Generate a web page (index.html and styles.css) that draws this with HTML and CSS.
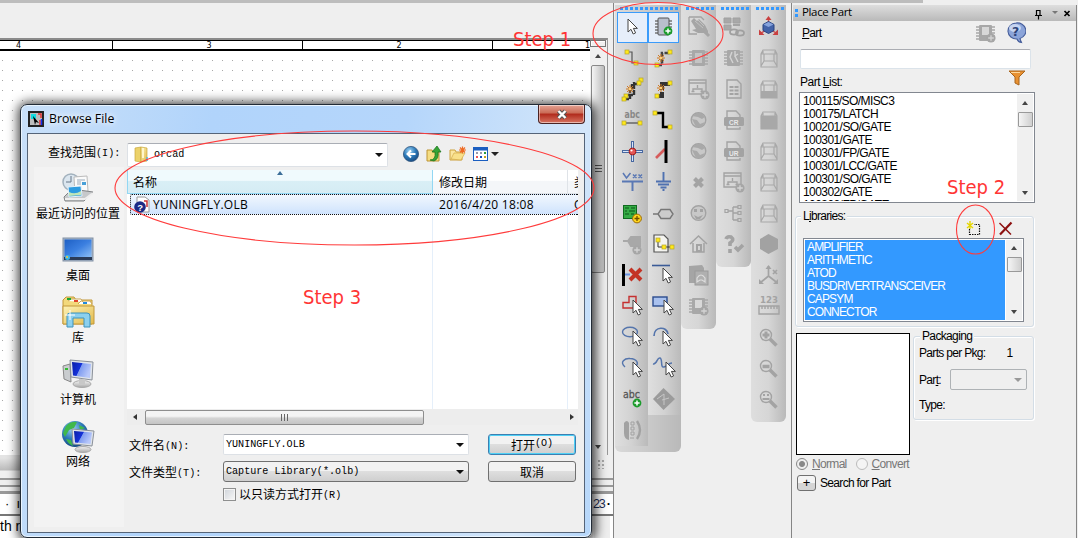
FILE: index.html
```html
<!DOCTYPE html>
<html lang="zh">
<head>
<meta charset="utf-8">
<title>Place Part</title>
<link rel="stylesheet" href="styles.css">
</head>
<body>
<svg class="defs" width="0" height="0">
<defs>
<linearGradient id="blueG" x1="0" y1="0" x2="1" y2="1"><stop offset="0" stop-color="#1d5fc4"/><stop offset=".5" stop-color="#3b7fe0"/><stop offset="1" stop-color="#8fc0f5"/></linearGradient>
<linearGradient id="scrG" x1="0" y1="0" x2="1" y2=".4"><stop offset="0" stop-color="#0a1fa8"/><stop offset=".48" stop-color="#1532d8"/><stop offset=".52" stop-color="#7f9cf0"/><stop offset="1" stop-color="#b8c8fa"/></linearGradient>
<linearGradient id="foldG" x1="0" y1="0" x2="1" y2="1"><stop offset="0" stop-color="#fdf3b8"/><stop offset="1" stop-color="#e2b94a"/></linearGradient>
<linearGradient id="greyG" x1="0" y1="0" x2="0" y2="1"><stop offset="0" stop-color="#f4f4f4"/><stop offset="1" stop-color="#a9a9a9"/></linearGradient>
<radialGradient id="ballG" cx=".4" cy=".3" r=".8"><stop offset="0" stop-color="#9fd4f5"/><stop offset=".5" stop-color="#2c79b8"/><stop offset="1" stop-color="#123f74"/></radialGradient>
<g id="cur"><path d="M0 0V13L3 10.3 5.2 15 7.6 13.9 5.4 9.4H9.4Z" fill="#fff" stroke="#444" stroke-width="1"/></g>
<g id="yb"><rect x="-2" y="-2" width="4" height="4" fill="#ffe81a" stroke="#b3a32c" stroke-width=".7"/></g>
<g id="spark" stroke="#d07820" stroke-width="1" fill="none"><path d="M-4 0H4M0-4V4M-3-3 3 3M3-3-3 3"/><circle r="1.3" fill="#ffd070" stroke="none"/></g>
<g id="plusG"><circle r="4.4" fill="#1c9c2c"/><path d="M-2.6 0H2.6M0-2.6V2.6" stroke="#fff" stroke-width="1.5"/></g>
<g id="plusX"><circle r="4.6" fill="#a6a6a6"/><path d="M-2.8 0H2.8M0-2.8V2.8" stroke="#d4d4d4" stroke-width="1.3"/></g>
<g id="chipX"><path d="M6 9h19M6 12h19M6 15h19M6 18h19M6 21h19" stroke="#a8a8a8" stroke-width="1.6"/><rect x="9" y="7" width="13" height="16" rx="1" fill="#a8a8a8"/></g>
<g id="magX"><circle cx="13" cy="13" r="5.5" fill="none" stroke="#a3a3a3" stroke-width="1.4"/><path d="M17 17l6.500 6.500" stroke="#a3a3a3" stroke-width="3.600"/></g>
<g id="cubeX" fill="none" stroke="#a8a8a8" stroke-width="1.2"><path d="M8 11 10 7H22L24 11V24H8ZM8 11H24M11 11V18H21V11M8 23l3-5M24 23l-3-5M10 8v3M22 8v3"/></g>
<symbol id="i-arrow" viewBox="0 0 31 31"><use href="#cur" x="11" y="7"/></symbol>
<symbol id="i-chip" viewBox="0 0 31 31"><path d="M7 9h17M7 12h17M7 15h17M7 18h17M7 21h17" stroke="#777" stroke-width="1.4"/><rect x="10" y="6" width="11" height="17" rx="1" fill="#b9bfcc" stroke="#555"/><use href="#plusG" x="20" y="19"/></symbol>
<symbol id="i-wire" viewBox="0 0 31 31"><path d="M11 9H15V20H18" fill="none" stroke="#555" stroke-width="1.2"/><use href="#yb" x="10" y="9"/><use href="#yb" x="19" y="20"/></symbol>
<symbol id="i-auto2" viewBox="0 0 31 31"><path d="M9 22H14V10H22" fill="none" stroke="#444" stroke-width="2.600" stroke-dasharray="5 1.500"/><use href="#spark" x="13" y="15"/><use href="#yb" x="22" y="9"/><use href="#yb" x="9" y="22"/></symbol>
<symbol id="i-auto3" viewBox="0 0 31 31"><path d="M7 25H13V14H15V10H24M11 21H17V8" fill="none" stroke="#333" stroke-width="2.400" stroke-dasharray="5 1"/><use href="#spark" x="13" y="15"/><use href="#yb" x="24" y="6"/><use href="#yb" x="22" y="9"/><use href="#yb" x="9" y="22"/><use href="#yb" x="7" y="25"/></symbol>
<symbol id="i-auto4" viewBox="0 0 31 31"><path d="M9 22H14V10H22" fill="none" stroke="#333" stroke-width="4" stroke-dasharray="9 2 14 0"/><use href="#spark" x="13" y="14"/><use href="#yb" x="22" y="9"/><use href="#yb" x="9" y="22"/></symbol>
<symbol id="i-abc" viewBox="0 0 31 31"><text x="7.500" y="13" font-size="10.500" font-weight="bold" fill="#888" font-family="DejaVu Sans" textLength="15.500" lengthAdjust="spacingAndGlyphs">abc</text><path d="M7 18H23" stroke="#555" stroke-width="1.300"/><use href="#yb" x="7" y="18"/><use href="#yb" x="23" y="18"/></symbol>
<symbol id="i-bus" viewBox="0 0 31 31"><path d="M8 8H15V22H22" fill="none" stroke="#000" stroke-width="2.400"/><use href="#yb" x="7" y="8"/><use href="#yb" x="22" y="22"/></symbol>
<symbol id="i-junc" viewBox="0 0 31 31"><path d="M5 15.500H26M15.500 5V26" stroke="#4868a0" stroke-width="3"/><path d="M6 15.500H25M15.500 6V25" stroke="#d9e6fb" stroke-width="1"/><circle cx="15.500" cy="15.500" r="3.400" fill="#e45656" stroke="#a11d1d"/><circle cx="14.500" cy="14.500" r="1.100" fill="#fff"/></symbol>
<symbol id="i-entry" viewBox="0 0 31 31"><path d="M8 22 17 13" stroke="#d65c5c" stroke-width="2.600"/><path d="M18 4V27" stroke="#000" stroke-width="3"/></symbol>
<symbol id="i-pwr" viewBox="0 0 31 31"><path d="M5 14.500H26M15.500 14.500V24" stroke="#5a78b4" stroke-width="2"/><path d="M6 6l3.500 5 4-5M16 7.500l3.500 3.500m0-3.500-3.500 3.500M21.500 7.500l3.500 3.500m0-3.500-3.500 3.500" fill="none" stroke="#5a78b4" stroke-width="1.500"/></symbol>
<symbol id="i-gnd" viewBox="0 0 31 31"><path d="M15.500 5V14M8 14.500H23M10 17.500H21M12.500 20.500H18.500M14.500 23H16.500" stroke="#4f71b0" stroke-width="1.900"/></symbol>
<symbol id="i-hier" viewBox="0 0 31 31"><rect x="6.500" y="7.500" width="13" height="13" fill="#35ac45" stroke="#116a20"/><path d="M8 10h4M14 10h4M8 13h2M12 13h6M8 16h4M14 16h3" stroke="#0c5518"/><circle cx="20" cy="20.500" r="4.400" fill="#ffd51d" stroke="#9c6a00"/><path d="M17.500 20.500h5M20 18v5" stroke="#714f00" stroke-width="1.300"/></symbol>
<symbol id="i-port" viewBox="0 0 31 31"><path d="M5 16H10L13 11.500H22L25 16 22 20.500H13L10 16" fill="#ccc" stroke="#777" stroke-width="1.400"/></symbol>
<symbol id="i-pin" viewBox="0 0 31 31"><path d="M6 12H11L14 8H23V17H14L11 12" fill="#a8a8a8" stroke="#a8a8a8" stroke-width="2"/><use href="#plusX" x="20" y="21"/></symbol>
<symbol id="i-off" viewBox="0 0 31 31"><path d="M6 6H16L20 10V23H6Z" fill="#f4f4f0" stroke="#555" stroke-width="1.200"/><path d="M10 11V18H24" fill="none" stroke="#333"/><use href="#yb" x="10" y="11"/><use href="#yb" x="16" y="18"/><use href="#yb" x="24" y="18"/></symbol>
<symbol id="i-noc" viewBox="0 0 31 31"><path d="M6.500 4V26" stroke="#000" stroke-width="3"/><path d="M8 14.500H13" stroke="#6890e0" stroke-width="2"/><path d="M13 9l11 11M24 9 13 20" stroke="#c33325" stroke-width="4"/></symbol>
<symbol id="i-line" viewBox="0 0 31 31"><path d="M4 5.500H22" stroke="#3b5b97" stroke-width="1.600"/><use href="#cur" x="15" y="8"/></symbol>
<symbol id="i-poly" viewBox="0 0 31 31"><path d="M6 17V11.500h6V5.500h7v11.500Z" fill="none" stroke="#c53030" stroke-width="1.400"/><use href="#cur" x="16" y="9"/></symbol>
<symbol id="i-rect" viewBox="0 0 31 31"><rect x="5" y="6" width="14" height="9" fill="#a9c1ee" stroke="#2c4c8e" stroke-width="1.400"/><use href="#cur" x="16" y="9"/></symbol>
<symbol id="i-ell" viewBox="0 0 31 31"><ellipse cx="13" cy="10" rx="7.500" ry="4.700" fill="none" stroke="#5575ac" stroke-width="1.400"/><use href="#cur" x="16" y="9"/></symbol>
<symbol id="i-arc" viewBox="0 0 31 31"><path d="M6 14C6 4 19 4 20 12" fill="none" stroke="#5575ac" stroke-width="1.700"/><use href="#cur" x="15" y="9"/></symbol>
<symbol id="i-earc" viewBox="0 0 31 31"><path d="M8 14C2 9 8 5 13 5.500 20 6 22 10 19 13" fill="none" stroke="#5575ac" stroke-width="1.400"/><use href="#cur" x="16" y="9"/></symbol>
<symbol id="i-bez" viewBox="0 0 31 31"><path d="M5 11C9 12 9 4 12 5S12 15 16 14 20 10 24 10" fill="none" stroke="#5575ac" stroke-width="1.500"/><use href="#cur" x="18" y="9"/></symbol>
<symbol id="i-txt" viewBox="0 0 31 31"><text x="6" y="14" font-size="11" fill="#555" stroke="#555" stroke-width=".3" font-family="DejaVu Sans" textLength="17" lengthAdjust="spacingAndGlyphs">abc</text><use href="#plusG" x="20" y="19"/></symbol>
<symbol id="i-diam" viewBox="0 0 31 31"><path d="M15.500 4 27 15 15.500 26 5 15Z" fill="#9b9b9b"/><path d="M9 15 16 10V21M14 16l7-2" stroke="#c6c6c6" fill="none"/></symbol>
<symbol id="i-misc" viewBox="0 0 31 31"><path d="M7 8q3-4 5 0v17q-5-1-5-7z" fill="#a2a2a2"/><path d="M14 7h3v3h-3zM14 12h3v3h-3zM14 17h3v3h-3zM13 23h4" fill="none" stroke="#a2a2a2"/><path d="M20 6q6 9 0 18" fill="none" stroke="#a2a2a2" stroke-width="2.400"/></symbol>
<symbol id="g-hand" viewBox="0 0 31 31"><path d="M6 5H18L21 8M6 5V22H14" fill="none" stroke="#a3a3a3" stroke-width="1.300"/><path d="M8 9l3-3 3 3 2-2 6 6 3 6v5l-4-3-6 0-6-3 4-1z" fill="#a5a5a5"/><path d="M21 19l5 5" stroke="#a5a5a5" stroke-width="3"/><path d="M12 9l8 7M15 8l6 6" stroke="#c8c8c8" stroke-width=".8"/></symbol>
<symbol id="g-chip" viewBox="0 0 31 31"><use href="#chipX"/><rect x="12" y="10" width="7" height="10" fill="#c4c4c4"/></symbol>
<symbol id="g-chip2" viewBox="0 0 31 31"><use href="#chipX"/><path d="M14 9l-2 5 3 6M17 8v5l3-2M17 13l3 6" stroke="#d4d4d4" fill="none" stroke-width="1.400"/></symbol>
<symbol id="g-chipadd" viewBox="0 0 31 31"><use href="#chipX"/><rect x="12" y="9" width="7" height="8" fill="#d8d8d8"/><use href="#plusX" x="21" y="20"/></symbol>
<symbol id="g-win" viewBox="0 0 31 31"><path d="M6 6H23V20H6ZM6 9H23M14.500 11v3M10 18v-3H19v3M8.500 17.500h3M17.500 17.500h3" fill="none" stroke="#a3a3a3" stroke-width="1.400"/><use href="#plusX" x="22" y="21"/></symbol>
<symbol id="g-face" viewBox="0 0 31 31"><circle cx="15.500" cy="15" r="7.300" fill="#c8c8c8" stroke="#a3a3a3" stroke-width="1.400"/><path d="M9 11l5-3h4l4 4-3 2-4-2zM9 14l5 1 3 4 5-2-3 5h-6z" fill="#a9a9a9"/></symbol>
<symbol id="g-smile" viewBox="0 0 31 31"><circle cx="15.500" cy="15" r="7.300" fill="#c8c8c8" stroke="#a3a3a3" stroke-width="1.400"/><path d="M11 11h3v3h-3zM17 11h3v3h-3zM11 17l4 2 5-2-3 4h-4z" fill="#a3a3a3"/></symbol>
<symbol id="g-x" viewBox="0 0 31 31"><path d="M11.500 11.500l8 8M19.500 11.500l-8 8" stroke="#a3a3a3" stroke-width="4"/></symbol>
<symbol id="g-home" viewBox="0 0 31 31"><path d="M7 15l8.500-8 8.500 8M10 14v9h11v-9" fill="none" stroke="#a3a3a3" stroke-width="1.500"/><path d="M14 16h4v6h-4z" fill="none" stroke="#a3a3a3" stroke-width="2"/></symbol>
<symbol id="g-lib" viewBox="0 0 31 31"><path d="M6 6l13-1 2 3V23H6z" fill="#a5a5a5"/><rect x="12" y="11" width="13" height="14" fill="#b0b0b0" stroke="#9a9a9a"/><path d="M14 22v-4q4-6 8 0v4l-3-2h-2z" fill="none" stroke="#ddd" stroke-width="1.200"/></symbol>
<symbol id="g-link" viewBox="0 0 31 31"><path d="M6 6h7v5H6zM15 6h7v5h-7zM6 13h7v5H6z" fill="#a8a8a8" stroke="#a0a0a0"/><path d="M15 13h7" stroke="#a3a3a3" stroke-width="2"/><ellipse cx="16" cy="20" rx="4" ry="2.600" fill="none" stroke="#a0a0a0" stroke-width="1.800"/><ellipse cx="22" cy="21" rx="4" ry="2.600" fill="none" stroke="#a0a0a0" stroke-width="1.800"/></symbol>
<symbol id="g-doc" viewBox="0 0 31 31"><path d="M9 6H19L23 10V24H9Z" fill="none" stroke="#a3a3a3" stroke-width="1.400"/><path d="M11.500 12h4v2h-4zM16.500 12h4v2h-4zM11.500 15.500h4v2h-4zM16.500 15.500h4v2h-4zM11.500 19h4v2h-4zM16.500 19h4v2h-4z" fill="#a3a3a3"/></symbol>
<symbol id="g-cr" viewBox="0 0 31 31"><path d="M9 12V6H18L22 10V20M9 21V24H22V22" fill="none" stroke="#a3a3a3" stroke-width="1.400"/><rect x="6" y="12" width="20" height="9" rx="1.500" fill="#a3a3a3"/><text x="11" y="19.500" font-size="8" font-weight="bold" fill="#e8e8e8" font-family="Liberation Sans" textLength="9.500" lengthAdjust="spacingAndGlyphs">CR</text></symbol>
<symbol id="g-ur" viewBox="0 0 31 31"><path d="M9 12V6H18L22 10V20M9 21V24H22V22" fill="none" stroke="#a3a3a3" stroke-width="1.400"/><rect x="6" y="12" width="20" height="9" rx="1.500" fill="#a3a3a3"/><text x="11" y="19.500" font-size="8" font-weight="bold" fill="#e8e8e8" font-family="Liberation Sans" textLength="9.500" lengthAdjust="spacingAndGlyphs">UR</text></symbol>
<symbol id="g-tree" viewBox="0 0 31 31"><path d="M10 13H15M15 9V22M15 9H20M15 15H20M15 22H20" fill="none" stroke="#a3a3a3" stroke-width="1.400"/><path d="M7 11.500h3v3H7zM20 7.500h3v3h-3zM20 13.500h3v3h-3zM20 20.500h3v3h-3z" fill="none" stroke="#a3a3a3" stroke-width="1.200"/></symbol>
<symbol id="g-q" viewBox="0 0 31 31"><path d="M8 10Q9 7 13 8 17 11 12 14V17M12 20v4" fill="none" stroke="#a3a3a3" stroke-width="3.600"/><path d="M17 18l3 3 5-5" fill="none" stroke="#a3a3a3" stroke-width="3.600"/></symbol>
<symbol id="c-3d" viewBox="0 0 31 31"><path d="M15.500 14V6M15.500 16 7 22M15.500 16l9 6" stroke="#d05050" stroke-width="1.400"/><path d="M12.500 8l3-4L18.500 8zM6 17.500v5.500h5.500zM25 17.500v5.500h-5.500z" fill="#c94040"/><path d="M15.500 9.500l5.500 3v6l-5.500 3-5.500-3v-6z" fill="#4262a8" stroke="#27427f"/><path d="M15.500 10 20.500 12.500 15.500 15 10.500 12.500z" fill="#86a3dc"/></symbol>
<symbol id="c-cube" viewBox="0 0 31 31"><use href="#cubeX"/></symbol>
<symbol id="c-cubeb" viewBox="0 0 31 31"><use href="#cubeX"/><path d="M8 17H24V24H8z" fill="#a8a8a8"/></symbol>
<symbol id="c-cubef" viewBox="0 0 31 31"><use href="#cubeX"/><path d="M8 11H24V24H8z" fill="#a8a8a8"/></symbol>
<symbol id="c-hex" viewBox="0 0 31 31"><path d="M15.500 5 25 10V20L15.500 25 7 20V10z" fill="#a2a2a2"/></symbol>
<symbol id="c-axis" viewBox="0 0 31 31"><path d="M15.500 6V16L7 23M15.500 16l9 7M20 10l4 4m0-4-4 4" stroke="#a3a3a3" stroke-width="1.700" fill="none"/><path d="M12.500 9 15.500 5l3 4zM6 19v5h5zM25 19v5h-5z" fill="#a3a3a3"/></symbol>
<symbol id="c-123" viewBox="0 0 31 31"><text x="7" y="12" font-size="9" font-weight="bold" fill="#a3a3a3" font-family="DejaVu Sans" textLength="18" lengthAdjust="spacingAndGlyphs">123</text><path d="M6 15H26V23H6zM9 15v3M12 15v3M15 15v3M18 15v3M21 15v3M24 15v3" fill="none" stroke="#a3a3a3" stroke-width="1.400"/></symbol>
<symbol id="c-z1" viewBox="0 0 31 31"><use href="#magX"/><path d="M13 9.500v7M9.500 13h7" stroke="#a3a3a3" stroke-width="3"/></symbol>
<symbol id="c-z2" viewBox="0 0 31 31"><use href="#magX"/><path d="M9.500 13.500h7" stroke="#a3a3a3" stroke-width="3.500"/></symbol>
<symbol id="c-z3" viewBox="0 0 31 31"><use href="#magX"/><path d="M9.500 15h7M10 11h2M14 11h2" stroke="#a3a3a3" stroke-width="2"/></symbol>
</defs>
</svg>

<div class="app">
  <div class="topstrip"></div>
  <div class="workspace">
    <div class="editor">
      <div class="sheet">
        <div class="canvas">
          <div class="ruler"><span class="r4">4</span><span class="r3">3</span><span class="r2">2</span><span class="r1">1</span></div>
          <div class="grid"></div>
        </div>
        <div class="vscroll"><i class="split"></i><span class="up"></span><i class="vthumb"><b></b></i><span class="down"></span></div>
      </div>
      <div class="hscroll"><i class="sizer"></i></div>
      <div class="lower">
        <div class="lruler"><span>·&nbsp;&nbsp;ı</span><span class="n23"><b>·</b>23<b>·</b></span></div>
        <div class="ltext"><span>th r</span><i><span class="up"></span></i></div>
      </div>
    </div>

    <div class="tools">
      <div class="bar bar-main">
        <div class="handle"></div>
        <div class="cols">
          <div class="col col-a">
            <svg class="on"><use href="#i-arrow"/></svg><svg><use href="#i-wire"/></svg><svg><use href="#i-auto3"/></svg><svg><use href="#i-abc"/></svg><svg><use href="#i-junc"/></svg><svg><use href="#i-pwr"/></svg><svg><use href="#i-hier"/></svg><svg><use href="#i-pin"/></svg><svg><use href="#i-noc"/></svg><svg><use href="#i-poly"/></svg><svg><use href="#i-ell"/></svg><svg><use href="#i-earc"/></svg><svg><use href="#i-txt"/></svg><svg><use href="#i-misc"/></svg>
          </div>
          <div class="col col-b">
            <svg class="on"><use href="#i-chip"/></svg><svg><use href="#i-auto2"/></svg><svg><use href="#i-auto4"/></svg><svg><use href="#i-bus"/></svg><svg><use href="#i-entry"/></svg><svg><use href="#i-gnd"/></svg><svg><use href="#i-port"/></svg><svg><use href="#i-off"/></svg><svg><use href="#i-line"/></svg><svg><use href="#i-rect"/></svg><svg><use href="#i-arc"/></svg><svg><use href="#i-bez"/></svg><svg><use href="#i-diam"/></svg>
          </div>
        </div>
      </div>
      <div class="bar bar-2"><div class="handle"></div>
        <svg><use href="#g-hand"/></svg><svg><use href="#g-chip"/></svg><svg><use href="#g-win"/></svg><svg><use href="#g-face"/></svg><svg><use href="#g-face"/></svg><svg><use href="#g-x"/></svg><svg><use href="#g-smile"/></svg><svg><use href="#g-home"/></svg><svg><use href="#g-lib"/></svg><svg><use href="#g-chipadd"/></svg>
      </div>
      <div class="bar bar-3"><div class="handle"></div>
        <svg><use href="#g-link"/></svg><svg><use href="#g-chip2"/></svg><svg><use href="#g-doc"/></svg><svg><use href="#g-cr"/></svg><svg><use href="#g-ur"/></svg><svg><use href="#g-win"/></svg><svg><use href="#g-tree"/></svg><svg><use href="#g-q"/></svg>
      </div>
      <div class="bar bar-4"><div class="handle"></div>
        <svg><use href="#c-3d"/></svg><svg><use href="#c-cube"/></svg><svg><use href="#c-cubeb"/></svg><svg><use href="#c-cubef"/></svg><svg><use href="#c-cube"/></svg><svg><use href="#c-cube"/></svg><svg><use href="#c-cube"/></svg><svg><use href="#c-hex"/></svg><svg><use href="#c-axis"/></svg><svg><use href="#c-123"/></svg><svg><use href="#c-z1"/></svg><svg><use href="#c-z2"/></svg><svg><use href="#c-z3"/></svg>
      </div>
    </div>

    <div class="panel">
      <div class="ptitle"><i class="grip"></i><span>Place Part</span>
        <svg width="42" height="14"><path d="M4.500 4v6M8 4v6M4 4.500h4.500M3 9.500h7M6.500 9.500v4" stroke="#000" fill="none" stroke-width="1.200"/><path d="M20 5h6l-3 3z" fill="#777"/><path d="M32.500 5l5 5M37.500 5l-5 5" stroke="#000" stroke-width="1.700"/></svg>
      </div>
      <div class="prow part-row"><span class="t"><u>P</u>art</span>
        <svg class="chipbtn" width="31" height="31"><use href="#g-chipadd"/></svg>
        <svg class="help" width="20" height="22" viewBox="0 0 20 22"><path d="M10 1a8.500 8 0 0 1 4 15.500q.5 2 1.500 4Q12 20 11 17A8.500 8 0 1 1 10 1z" fill="#8ba4d9" stroke="#465e9b" stroke-width="1.100"/><ellipse cx="9" cy="6" rx="6" ry="4" fill="#d5e1f8" opacity=".8"/><text x="6" y="14" font-size="12.500" font-weight="bold" fill="#2c4379" font-family="DejaVu Sans">?</text></svg>
      </div>
      <div class="pinput"></div>
      <div class="prow list-row"><span class="t">Part <u>L</u>ist:</span>
        <svg width="18" height="16"><path d="M1 1H17L11 7V15L7 13V7Z" fill="#e89132" stroke="#a8641c"/><path d="M3 2.500h9" stroke="#ffd79a"/></svg>
      </div>
      <div class="listbox parts"><div class="items"><p>100115/SO/MISC3</p><p>100175/LATCH</p><p>100201/SO/GATE</p><p>100301/GATE</p><p>100301/FP/GATE</p><p>100301/LCC/GATE</p><p>100301/SO/GATE</p><p>100302/GATE</p><p>100302/FP/GATE</p></div><div class="sb"><span class="up"></span><i></i><span class="down"></span></div></div>
      <div class="group libs"><span class="legend">L<u>i</u>braries:</span>
        <div class="libbtns">
          <svg width="17" height="15"><path d="M3.500 13.500H13.500V3.500H8M3.500 8v6" fill="none" stroke="#111" stroke-width="1.200" stroke-dasharray="1.500 1"/><path d="M1 2l6 5M7 2 1 7M4 0v8" stroke="#e5d600" stroke-width="1.400"/></svg>
          <svg width="15" height="15"><path d="M1.500 2 13 13.500" stroke="#8c1010" stroke-width="1.500"/><path d="M13.500 1.500 2 13.500" stroke="#8c1010" stroke-width="2.200"/></svg>
        </div>
        <div class="listbox blue"><div class="items"><p>AMPLIFIER</p><p>ARITHMETIC</p><p>ATOD</p><p>BUSDRIVERTRANSCEIVER</p><p>CAPSYM</p><p>CONNECTOR</p></div><div class="sb"><span class="up"></span><i></i><span class="down"></span></div></div>
      </div>
      <div class="lowerrow">
        <div class="preview"></div>
        <div class="group pack"><span class="legend">Packaging</span>
          <div class="kv"><span class="t">Parts per Pkg:</span><span class="t num">1</span></div>
          <div class="kv"><span class="t">Par<u>t</u>:</span><span class="dis"><b class="tri"></b></span></div>
          <div class="kv"><span class="t">Type:</span></div>
        </div>
      </div>
      <div class="radios"><i class="rad sel"></i><span class="t"><u>N</u>ormal</span><i class="rad"></i><span class="t"><u>C</u>onvert</span></div>
      <div class="search"><button>+</button><span class="t">Search for Part</span></div>
    </div>
  </div>

  <div class="dialog">
    <div class="dtitle">
      <svg width="16" height="16"><rect width="16" height="16" fill="#222"/><path d="M2 2h12v12H2z" fill="#bdbdbd"/><path d="M3 3h5v5H3z" fill="#12dce0"/><path d="M10 3h3v4M12 9v5" stroke="#e03030" stroke-width="1.500" fill="none"/><path d="M13.500 8v6" stroke="#1030f0" stroke-width="1.500"/><path d="M5 5 11 12 8 11 7 14z" fill="#000"/></svg>
      <span>Browse File</span>
      <div class="close"><svg width="14" height="11"><path d="M3.500 2 10.500 9M10.500 2 3.500 9" stroke="#555" stroke-width="4.400"/><path d="M3.500 2 10.500 9M10.500 2 3.500 9" stroke="#fff" stroke-width="2.400"/></svg></div>
    </div>
    <div class="dbody">
      <div class="look"><label class="cj">查找范围<span class="mono">(I):</span></label>
        <div class="lcombo"><svg width="15" height="17"><path d="M1 2 7 1V16L1 15z" fill="#ecd26a" stroke="#c9a83a" stroke-width=".7"/><path d="M7 1 13 2V15L7 16z" fill="url(#foldG)" stroke="#c9a83a" stroke-width=".7"/><path d="M9 2v10" stroke="#fff6cc" stroke-width="2"/><path d="M13 11v4" stroke="#51b3e8" stroke-width="1.500"/></svg><span class="mono">orcad</span><b class="tri"></b></div>
        <svg class="nav" width="98" height="20"><circle cx="9" cy="10" r="7.600" fill="url(#ballG)" stroke="#31557d" stroke-width=".8"/><path d="M13.500 10H6M9 6.500 5.500 10 9 13.500" stroke="#fff" stroke-width="2" fill="none"/>
          <path d="M25 6h5l1 2h6v9H25z" fill="#f5dd82" stroke="#bd9435"/><path d="M28 16q6 0 5-8h-3l5-6 4 6h-3q1 7-4 9z" fill="#36a436" stroke="#167016" stroke-width=".7"/>
          <path d="M48 6h5l1 2h6v8H48z" fill="#fbe6a0" stroke="#cda23e"/><path d="M49 15l3-6h11l-4 7z" fill="#f9e08a" stroke="#cda23e" stroke-width=".6"/><path d="M57 6h7M60.500 2.500v7M58 3.500l5 5M63 3.500l-5 5" stroke="#ef6a22" stroke-width="1.200"/>
          <rect x="71.500" y="3.500" width="14" height="13" fill="#fff" stroke="#1a5ec0"/><path d="M71 5h15" stroke="#1a5ec0" stroke-width="3"/><path d="M74 9h2M78 9h2" stroke="#99a" stroke-width="2"/><path d="M82 9h2" stroke="#2a9c3d" stroke-width="2"/><path d="M74 13h2" stroke="#e55" stroke-width="2"/><path d="M78 13h2" stroke="#114fbb" stroke-width="2"/><path d="M82 13h2" stroke="#c9a21a" stroke-width="2"/><path d="M89 8h8l-4 4z" fill="#222"/></svg>
      </div>
      <div class="dmid">
        <div class="places">
          <div class="place"><svg width="32" height="32"><circle cx="9" cy="10" r="8" fill="#dbe6ef" stroke="#a2b1bd" stroke-width="1.500"/><path d="M9 4v6H4" stroke="#678" fill="none"/><path d="M12 5l13-1 1 15-13 4z" fill="#fafafa" stroke="#bbb"/><path d="M15 8h8M15 10h4M15 12h4" stroke="#9ab"/><path d="M20 10h4v3h-4z" fill="#49a0d8"/><path d="M2 25 10 17 31 20 22 29 3 29z" fill="#c6c8ca" stroke="#818486"/><path d="M6 15l13-1 1 10-13 1z" fill="#2c9be0" stroke="#e5f2fa"/><path d="M7 20q6 3 12-1v4l-12 1z" fill="#bfe6b8"/><path d="M3 27h20l8-6" stroke="#eee" stroke-width="2" fill="none"/></svg><span>最近访问的位置</span></div>
          <div class="place"><svg width="32" height="32"><rect x="1" y="4" width="30" height="23" fill="#a4b4c8" stroke="#8291a5"/><rect x="2.500" y="5.500" width="27" height="18" fill="url(#blueG)"/><path d="M2 24.500h28" stroke="#2b3b57" stroke-width="3"/><circle cx="5.500" cy="23.500" r="2.500" fill="#3cb6e8"/><circle cx="5" cy="23" r="1" fill="#f3c43a"/></svg><span>桌面</span></div>
          <div class="place"><svg width="34" height="32"><path d="M2 4 5 1H13L15 4H31V28H2z" fill="#f3d97c" stroke="#c2983a"/><path d="M7 5 10 3h10l2 3M17 8l3-3h9l2 3" fill="#fff" stroke="#c9a557"/><path d="M6 3h4" stroke="#1ca833" stroke-width="2"/><path d="M13 5h4" stroke="#e0432c" stroke-width="2"/><path d="M22 7h4" stroke="#1f8ae0" stroke-width="2"/><path d="M2 10H33V28H2z" fill="url(#foldG)" stroke="#c2983a"/><path d="M6 31V20q0-3 3-3H26q3 0 3 3V31H23V22H12V31z" fill="#8cd0ee" stroke="#3d93bd"/><path d="M9 14v10M4 19h10" stroke="#fff"/></svg><span>库</span></div>
          <div class="place"><svg width="32" height="32"><path d="M1 8 8 6 9 24 2 21z" fill="#c9cccf" stroke="#888"/><path d="M3 11h3" stroke="#3b3" stroke-width="2"/><path d="M8 2 31 4 30 22 9 19z" fill="#dfe4ea" stroke="#8b9199"/><path d="M10 4 29 6 28 20 11 17.500z" fill="url(#scrG)"/><ellipse cx="20" cy="26" rx="9" ry="3.500" fill="url(#greyG)" stroke="#aaa"/><path d="M17 21h6v5h-6z" fill="#c8c8c8"/></svg><span>计算机</span></div>
          <div class="place"><svg width="34" height="34"><circle cx="14" cy="14" r="13" fill="url(#ballG)"/><path d="M5 6Q10 1 16 2L13 8 8 10 4 17 2 13zM5 19l5 1 2 6q-5-2-7-7zM18 5l6 3-5 2z" fill="#3fb84b"/><path d="M11 9 33 11 31 26 12 24z" fill="#dfe4ea" stroke="#8b9199"/><path d="M13 11 31 12.500 29.500 24 14 22.500z" fill="url(#scrG)"/><ellipse cx="22" cy="29.500" rx="8" ry="3" fill="url(#greyG)" stroke="#aaa"/></svg><span>网络</span></div>
        </div>
        <div class="dmain">
          <div class="filelist">
            <div class="fhead"><span class="h1"><b class="sort"></b>名称</span><span class="h2">修改日期</span><span class="h3">类</span></div>
            <div class="frow"><span class="c1"><svg width="16" height="18"><path d="M3 1H11L15 4V16H3z" fill="#fff" stroke="#999"/><path d="M10 5h3v6" stroke="#c33" fill="none" stroke-width="1.500"/><circle cx="6" cy="11" r="5.800" fill="#1b2a86"/><text x="3.200" y="14.500" font-size="9.500" font-weight="bold" fill="#fff" font-family="Liberation Sans">?</text></svg>YUNINGFLY.OLB</span><span class="c2">2016/4/20 18:08</span><span class="c3">O</span></div>
            <div class="fbody"></div>
            <div class="fscroll"><span class="left"></span><i><b></b></i><span class="right"></span></div>
          </div>
          <div class="form">
            <label class="cj">文件名<span class="mono">(N):</span></label><div class="fi"><span class="mono">YUNINGFLY.OLB</span><b class="tri"></b></div><div class="btn def">打开<span class="mono">(O)</span></div>
            <label class="cj">文件类型<span class="mono">(T):</span></label><div class="fi sel"><span class="mono">Capture Library(*.olb)</span><b class="tri"></b></div><div class="btn">取消</div>
          </div>
          <div class="ro"><i></i><span class="cj">以只读方式打开<span class="mono">(R)</span></span></div>
        </div>
      </div>
    </div>
  </div>

  <svg class="marks" width="1078" height="538"><g fill="none" stroke="#ff3b3b" stroke-width="1.100"><ellipse cx="658" cy="33.500" rx="65" ry="31"/><ellipse cx="975.500" cy="229.500" rx="19" ry="24.500"/><ellipse cx="354.500" cy="188" rx="239.500" ry="57"/></g></svg>
  <span class="step s1">Step 1</span><span class="step s2">Step 2</span><span class="step s3">Step 3</span>
</div>
</body>
</html>
```
FILE: styles.css
```css
* { box-sizing: border-box; }
body { margin: 0; background: #efefef; font-family: "Liberation Sans", "Noto Sans CJK SC", sans-serif; font-size: 12px; color: #000; }
p { margin: 0; }
.defs { position: absolute; }
.app { position: relative; width: 1078px; height: 538px; overflow: hidden; background: #efefef; }
.topstrip { height: 3px; width: 923px; background: #bdbdbd; }
.workspace { display: flex; height: 535px; }

/* editor behind the dialog */
.editor { width: 614px; border-right: 1px solid #858585; padding-top: 35px; flex: none; }
.sheet { display: flex; width: 608px; height: 417px; border-top: 2px solid #8b8b8b; border-right: 1px solid #999; }
.canvas { width: 590px; flex: none; }
.ruler { height: 11px; background: #fff; border-top: 1px solid #000; border-bottom: 2px solid #000; display: flex; font: 8px/9px "DejaVu Sans", sans-serif; color: #000; text-align: center; }
.ruler span { border-right: 1px solid #000; height: 8px; }
.ruler .r4 { width: 113px; padding-right: 75px; }
.ruler .r3 { width: 190px; padding-left: 3px; }
.ruler .r2 { width: 190px; padding-left: 3px; }
.ruler .r1 { width: 97px; border: 0; text-align: right; }
.grid { height: 404px; background-color: #fff; background-image: radial-gradient(circle at 2.500px 9.500px, #a9a9a9 .7px, transparent .9px); background-size: 10px 10px; }
.vscroll { width: 16px; background: #f0f0f0; display: flex; flex-direction: column; align-items: center; }
.split { width: 16px; height: 7px; border: 1px solid #777; box-shadow: inset 1px 1px #fff; }
.up, .down, .left, .right { width: 0; height: 0; border: 3px solid transparent; flex: none; }
.up { border-top: 0; border-bottom: 4px solid #444; }
.down { border-bottom: 0; border-top: 4px solid #444; }
.left { border-left: 0; border-right: 4px solid #333; }
.right { border-right: 0; border-left: 4px solid #333; }
.vscroll .up { margin: 7px 0; }
.vthumb { width: 14px; height: 208px; border: 1px solid #888; border-radius: 2px; background: linear-gradient(90deg, #f4f4f4, #d8d8d8 50%, #bbb); display: flex; align-items: center; justify-content: center; }
.vthumb b { width: 7px; height: 8px; background: repeating-linear-gradient(#555 0 1px, transparent 1px 3px); }
.vscroll .down { margin-top: auto; margin-bottom: 6px; }
.hscroll { height: 25px; width: 613px; border-bottom: 2px solid #999; background: linear-gradient(#e4e4e4 0 3px, #bbb 15px, #f0f0f0 16px); display: flex; justify-content: flex-end; }
.sizer { width: 22px; height: 23px; background: radial-gradient(circle, #aaa 1px, transparent 1.300px) 0 0 / 4px 4px content-box, #efefef; background-repeat: repeat; padding: 4px 8px 9px 6px; }
.lower { margin-top: 5px; width: 613px; border-top: 2px solid #999; height: 60px; padding-top: 4px; }
.lruler { height: 25px; background: #fff; border-top: 3px solid #999; border-bottom: 2px solid #777; display: flex; justify-content: space-between; padding: 0 0 0 5px; line-height: 20px; font-size: 13px; }
.n23 { color: #1c2d55; font-size: 12.500px; letter-spacing: -1px; padding-right: 1px; }
.n23 b { color: #000; margin: 0 2px; }
.ltext { display: flex; justify-content: space-between; background: #fff; height: 30px; font-size: 14px; line-height: 20px; padding-right: 3px; }
.ltext i { width: 16px; background: #eee; padding: 8px 5px; }

/* toolbars */
.tools { width: 178px; padding: 2px 0 0 1px; display: flex; align-items: flex-start; border-right: 1px solid #858585; flex: none; }
.bar { flex: none; border-radius: 0 0 6px 6px; background: linear-gradient(90deg, #dedede, #d6d6d6 50%, #b9b9b9); padding-top: 2px; display: flex; flex-direction: column; align-items: center; }
.bar svg { width: 31px; height: 31px; display: block; flex: none; }
.handle { height: 3px; margin-bottom: 2px; align-self: stretch; margin-left: 5px; margin-right: 2px; background: repeating-linear-gradient(90deg, #3399ff 0 3px, transparent 3px 5px); }
.bar-main { width: 66px; height: 447px; align-items: stretch; background: linear-gradient(90deg, #dadada, #b9b9b9); }
.cols { display: flex; align-items: flex-start; }
.col { padding-left: 2px; background: linear-gradient(90deg, #dfdfdf, #d2d2d2 50%, #bababa); }
.col-a { width: 33px; }
.col-b { width: 33px; padding-left: 0; }
svg.on { background: #e6eefa; outline: 1px solid #3a9bfa; outline-offset: -1px; }
.bar-2 { width: 35px; height: 324px; }
.bar-3 { width: 35px; height: 262px; }
.bar-4 { width: 35px; height: 417px; }

/* place part panel */
.panel { width: 285px; margin-top: 2px; border-right: 1px solid #858585; padding-left: 1px; flex: none; font-size: 12px; }
.t, .legend { letter-spacing: -.68px; white-space: nowrap; }
.legend { letter-spacing: -.5px; }
.ptitle { height: 16px; background: linear-gradient(#dedede, #b9b9b9); display: flex; align-items: center; font-family: "Open Sans", sans-serif; font-size: 11.500px; letter-spacing: -.35px; line-height: 14px; padding-right: 2px; }
.ptitle span { margin-top: -2px; }
.ptitle svg { margin-left: auto; }
.grip { width: 3px; height: 8px; margin: 0 4px 0 2px; background: linear-gradient(#39f 0 3px, transparent 3px 5px, #39f 5px 8px); }
.prow { display: flex; }
.part-row { height: 28px; padding-left: 9px; align-items: flex-start; }
.part-row .t { margin-top: 5px; width: 168px; flex: none; }
.chipbtn { margin-top: -3px; }
.help { margin: 1px 0 0 5px; }
.pinput { margin-left: 7px; width: 231px; height: 20px; background: #fff; border: 1px solid #dbe3ea; border-top-color: #abadb3; border-radius: 2px; }
.list-row { height: 23px; padding-left: 7px; }
.list-row .t { margin-top: 6px; width: 208px; letter-spacing: -.5px; }
.list-row svg { margin-top: 1px; }
.listbox { border: 1px solid #828790; background: #fff; display: flex; overflow: hidden; line-height: 13px; }
.listbox .items { flex: 1; letter-spacing: -.57px; }
.parts { margin-left: 6px; width: 236px; height: 111px; }
.parts .items { padding: 2px 3px; height: 108px; overflow: hidden; }
.sb { width: 16px; background: #f0f0f0; margin: 1px; display: flex; flex-direction: column; align-items: center; padding: 7px 0 6px; }
.sb i { width: 15px; height: 15px; margin-top: 7px; border: 1px solid #999; border-radius: 1px; background: linear-gradient(90deg, #f5f5f5, #cfcfcf); }
.sb .down { margin-top: auto; }
.group { border: 1px solid #d3dde6; border-radius: 3px; box-shadow: inset 1px 1px #fff, 1px 1px #fff; }
.legend { display: block; width: max-content; background: #efefef; padding: 0 2px; line-height: 14px; }
.libs { margin: 13px 0 0 2px; width: 239px; height: 111px; padding-left: 7px; }
.libs .legend { margin-top: -8px; margin-left: -2px; letter-spacing: -.7px; }
.libbtns { height: 17px; display: flex; gap: 15px; padding: 0 0 0 163px; margin-top: -2px; }
.blue { width: 221px; height: 84px; padding: 1px; }
.blue .items { background: #3399ff; color: #fff; padding: 1px 2px; letter-spacing: -.85px; }
.blue .sb { margin: 0 0 0 1px; padding: 6px 0; }
.lowerrow { display: flex; gap: 3px; margin: 6px 0 0 3px; }
.preview { width: 114px; height: 122px; background: #fff; border: 1px solid #000; }
.pack { width: 121px; height: 84px; margin-top: 3px; padding-left: 5px; }
.pack .legend { margin: -8px 0 0 1px; letter-spacing: -.65px; }
.kv { display: flex; align-items: center; height: 20px; }
.kv + .kv { height: 33px; }
.kv + .kv + .kv { height: 18px; }
.num { margin-left: 21px; }
.dis { width: 77px; height: 21px; border: 1px solid #aeb2b5; border-radius: 2px; margin-left: 9px; display: flex; align-items: center; justify-content: flex-end; padding-right: 4px; }
.tri { width: 0; height: 0; border: 4px solid transparent; border-top-color: #111; border-bottom: 0; flex: none; }
.dis .tri { border-top-color: #999; }
.radios { display: flex; align-items: center; height: 18px; padding-left: 3px; color: #777; gap: 4px; }
.rad { width: 12px; height: 12px; border: 1px solid #bbb; border-radius: 50%; background: #f4f4f4; }
.rad.sel { background: radial-gradient(#888 0 2.500px, #eee 3.500px); border-color: #888; }
.radios .t:nth-child(2) { margin-right: 5px; }
.search { display: flex; align-items: center; padding-left: 4px; gap: 4px; height: 19px; }
.search button { width: 19px; height: 16px; padding: 0; border: 1px solid #707070; border-radius: 3px; background: linear-gradient(#f4f4f4 50%, #d5d5d5 50%); font: 13px/12px "Liberation Sans", sans-serif; }

/* dialog window */
.dialog { position: absolute; left: 20px; top: 104px; width: 572px; height: 434px; border: 1px solid #222b36; border-radius: 7px; background: linear-gradient(100deg, #c9e0f9, #b1d4fb 30%, #b5d6fb 60%, #d3e6fa 88%, #b5d6fa); box-shadow: inset 0 0 0 1px #eaf5ff, 1px 1px 11px 3px rgba(0,0,0,.75); padding: 0 6px 5px; }
.dtitle { display: flex; align-items: center; height: 28px; font-family: "Open Sans", sans-serif; font-size: 12.300px; gap: 5px; padding-left: 1px; }
.dtitle span { text-shadow: 0 0 5px #fff, 0 0 8px #fff; margin-top: -2px; }
.close { margin-left: auto; margin-bottom: 9px; width: 47px; height: 19px; border: 1px solid #4a2323; border-top: 0; border-radius: 0 0 4px 4px; background: linear-gradient(#e5a293, #c96a55 45%, #b0291b 50%, #d77562); box-shadow: inset 0 0 0 1px rgba(255,255,255,.5); display: flex; align-items: center; justify-content: center; }
.dbody { height: 400px; border: 1px solid #556478; background: #efefef; }
.cj { font-family: "Liberation Mono", "Noto Sans CJK SC", sans-serif; font-size: 12px; white-space: nowrap; }
.mono { font-family: "Liberation Mono", monospace; font-size: 10.100px; }
.cj .mono, .btn .mono { position: relative; top: -1px; }
.look { height: 33px; display: flex; padding: 8px 0 0 20px; align-items: center; }
.look label { width: 79px; margin-top: -6px; }
.lcombo { width: 261px; height: 24px; background: #fff; border: 1px solid #dde1e6; border-top-color: #aaaeb5; border-radius: 2px; display: flex; align-items: center; padding: 0 4px 0 6px; gap: 5px; }
.lcombo .tri, .fi .tri { margin-left: auto; }
.nav { margin-left: 14px; margin-top: -2px; }
.dmid { display: flex; }
.places { width: 90px; height: 360px; margin-left: 6px; background: #f3f3f3; display: flex; flex-direction: column; padding: 5px 2px 0 0; }
.place { height: 62px; display: flex; flex-direction: column; align-items: center; font: 12px/14px "Noto Sans CJK SC", sans-serif; white-space: nowrap; }
.place svg { height: 34px; flex: none; }
.dmain { margin-left: 3px; width: 451px; padding-top: 3px; }
.filelist { width: 451px; height: 255px; background: #fff; overflow: hidden; }
.fhead { height: 24px; display: flex; line-height: 23px; font-family: "Noto Sans CJK SC", sans-serif; background: linear-gradient(#fff 45%, #f4f6f9 50%); border-bottom: 1px solid #dfe3e8; }
.fhead span { padding-left: 6px; overflow: hidden; }
.fhead .h1 { position: relative; padding-left: 5px; width: 306px; border: 1px solid #93d7f3; border-top: 0; height: 24px; background: linear-gradient(#f0fafd 45%, #d9eff6 50%, #d5ecf4); }
.sort { position: absolute; left: 149px; top: 1px; border: 3px solid transparent; border-top: 0; border-bottom: 4px solid #3b6e98; }
.h2 { width: 135px; border-right: 1px solid #dfe3e8; }
.h3 { width: 10px; }
.frow { height: 21px; margin-left: 3px; width: 448px; display: flex; align-items: center; border: 1px dotted #111; border-right: 0; border-radius: 2px 0 0 2px; background: linear-gradient(#f1f7fe, #cfe3fd); font-family: "Open Sans", "Noto Sans", sans-serif; font-size: 12px; letter-spacing: .29px; white-space: nowrap; overflow: hidden; }
.frow .c1 { width: 308px; flex: none; display: flex; align-items: center; gap: 3px; padding-left: 3px; }
.c2 { width: 135px; flex: none; }
.fbody { height: 194px; background: linear-gradient(90deg, transparent 305px, #e5effa 305px 306px, transparent 306px 440px, #e5effa 440px 441px, transparent 441px); }
.fscroll { height: 16px; background: #ededed; display: flex; align-items: center; padding: 0 4px 0 6px; }
.fscroll i { margin-left: 8px; width: 279px; height: 15px; border: 1px solid #8e8e8e; border-radius: 2px; background: linear-gradient(#f4f4f4 40%, #d4d4d4 55%, #c4c4c4); display: flex; align-items: center; justify-content: center; }
.fscroll i b { width: 8px; height: 7px; background: repeating-linear-gradient(90deg, #666 0 1px, transparent 1px 3px); }
.fscroll .right { margin-left: auto; }
.form { display: grid; grid-template-columns: 94px 246px 107px; row-gap: 6px; margin: 9px 0 0 2px; align-items: center; }
.form > .btn { margin-left: 19px; width: 88px; }
.fi { height: 21px; border: 1px solid #dde1e6; border-top-color: #aaaeb5; border-radius: 2px; background: #fff; display: flex; align-items: center; padding: 0 4px 0 2px; }
.fi.sel { border: 1px solid #707070; border-radius: 3px; background: linear-gradient(#f2f2f2 48%, #dedede 50%, #cfcfcf); }
.btn { height: 21px; border: 1px solid #707070; border-radius: 3px; background: linear-gradient(#f2f2f2 48%, #dedede 50%, #cfcfcf); display: flex; align-items: center; justify-content: center; font-family: "Noto Sans CJK SC", sans-serif; }
.btn.def { border-color: #3c7fb1; box-shadow: inset 0 0 0 1px #4fd0f5; }
.ro { display: flex; align-items: center; gap: 3px; margin: 3px 0 0 96px; height: 18px; }
.ro i { width: 13px; height: 13px; border: 1px solid #8e8f8f; background: linear-gradient(135deg, #cfd4da, #f8f8f8); box-shadow: inset 0 0 0 1px #f4f4f4; }

/* frow date column follows the header text inset */
.c2 { margin-left: 0; }
.frow .c1 { width: 308px; }

/* annotations */
.marks { position: absolute; left: 0; top: 0; }
.step { position: absolute; font: 20px/24px "DejaVu Sans Condensed", "DejaVu Sans", sans-serif; font-stretch: condensed; color: #ff3535; white-space: nowrap; }
.s1 { left: 513px; top: 27px; }
.s2 { left: 947px; top: 175px; }
.s3 { left: 303px; top: 285px; }
```
